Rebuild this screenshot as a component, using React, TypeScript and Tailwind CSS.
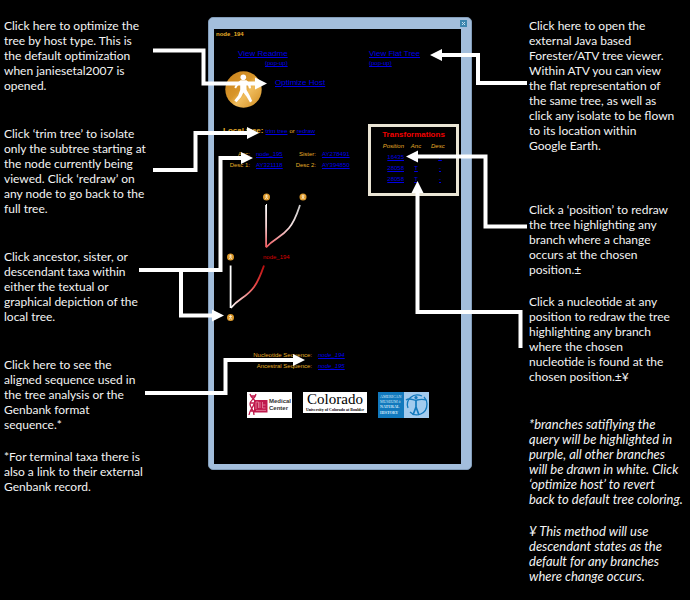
import React from "react";

const leftNotes = [
  { gap: "text-[12px]", text: "Click here to optimize the\ntree by host type. This is\nthe default optimization\nwhen janiesetal2007 is\nopened." },
  { gap: "mt-[33px] text-[12px]", text: "Click ‘trim tree’ to isolate\nonly the subtree starting at\nthe node currently being\nviewed. Click ‘redraw’ on\nany node to go back to the\nfull tree." },
  { gap: "mt-[33px] text-[12px]", text: "Click ancestor, sister, or\ndescendant taxa within\neither the textual or\ngraphical depiction of the\nlocal tree." },
  { gap: "mt-[33px] text-[12px]", text: "Click here to see the\naligned sequence used in\nthe tree analysis or the\nGenbank format\nsequence.*" },
  { gap: "mt-[17px] text-[12px]", text: "*For terminal taxa there is\nalso a link to their external\nGenbank record." },
];

const rightNotes = [
  { gap: "text-[12px]", text: "Click here to open the\nexternal Java based\nForester/ATV tree viewer.\nWithin ATV you can view\nthe flat representation of\nthe same tree, as well as\nclick any isolate to be flown\nto its location within\nGoogle Earth." },
  { gap: "mt-[49px] text-[12px]", text: "Click a ‘position’ to redraw\nthe tree highlighting any\nbranch where a change\noccurs at the chosen\nposition.±" },
  { gap: "mt-[17px] text-[12px]", text: "Click a nucleotide at any\nposition to redraw the tree\nhighlighting any branch\nwhere the chosen\nnucleotide is found at the\nchosen position.±¥" },
  { gap: "mt-[33px] text-[13px] italic", text: "*branches satiflying the\nquery will be highlighted in\npurple, all other branches\nwill be drawn in white. Click\n‘optimize host’ to revert\nback to default tree coloring." },
  { gap: "mt-[17px] text-[13px] italic", text: "¥ This method will use\ndescendant states as the\ndefault for any branches\nwhere change occurs." },
];

const transformations = [
  { position: "16435", anc: "C", desc: "T" },
  { position: "28058", anc: "T", desc: "-" },
  { position: "28058", anc: "T", desc: "-" },
];

function Notes({ items }: { items: { gap: string; text: string }[] }) {
  return (
    <>
      {items.map((n) => (
        <p key={n.text} className={"whitespace-pre leading-[15px] text-[#f4f4f4] " + n.gap}>
          {n.text}
        </p>
      ))}
    </>
  );
}

function Link({ children, className = "" }: { children: React.ReactNode; className?: string }) {
  return (
    <a href="#" className={"text-[#0000e6] underline decoration-1 underline-offset-1 " + className}>
      {children}
    </a>
  );
}

function HostIcon() {
  return (
    <svg viewBox="0 0 37 37" className="size-[37px] shrink-0" role="img" aria-label="Human host">
      <defs>
        <linearGradient id="host" x1="0" y1="0" x2="1" y2="1">
          <stop offset="0" stopColor="#c9811c" />
          <stop offset="0.45" stopColor="#d8962a" />
          <stop offset="0.6" stopColor="#f0bd5e" />
          <stop offset="1" stopColor="#d08a1c" />
        </linearGradient>
      </defs>
      <circle cx="18.5" cy="18.5" r="18.2" fill="url(#host)" />
      <circle cx="18.3" cy="6.3" r="2.8" fill="#fff" />
      <path d="M15.5 9.2 L21.5 9.2 L25.5 13 L26 17.3 L24 17.6 L23 14.3 L21.4 13.3 L21.6 19 L24.6 24.2 L27.2 30 L25 31.5 L21.5 25.4 L18.4 21.6 L16 26.2 L11.5 31.2 L9.3 29.6 L13.2 24.6 L15.2 19 L15.2 13.2 L13 14.2 L11 17.6 L9.3 16.6 L11.5 12.4 Z" fill="#fff" />
    </svg>
  );
}

function TreeNode({ x, y }: { x: number; y: number }) {
  return (
    <g>
      <circle cx={x} cy={y} r="3.5" fill="#dc992c" />
      <path d={`M${x} ${y - 2.4} v2 m-1.5 -0.6 h3 m-1.5 0.8 l-1.2 2.3 m1.2 -2.3 l1.2 2.3`} stroke="#fff3d4" strokeWidth="0.8" fill="none" />
    </g>
  );
}

function LocalTree() {
  return (
    <svg viewBox="0 0 100 135" className="mt-[20px] ml-[9px] h-[135px] w-[100px]" role="img" aria-label="Local tree">
      <defs>
        <linearGradient id="stem" gradientUnits="userSpaceOnUse" x1="0" y1="15" x2="0" y2="57">
          <stop offset="0" stopColor="#fff" />
          <stop offset="0.5" stopColor="#f4d0d0" />
          <stop offset="1" stopColor="#f05a60" />
        </linearGradient>
        <linearGradient id="child" gradientUnits="userSpaceOnUse" x1="43" y1="57" x2="77" y2="15">
          <stop offset="0" stopColor="#f05a60" />
          <stop offset="0.6" stopColor="#f6e4e4" />
          <stop offset="1" stopColor="#c8c8c8" />
        </linearGradient>
        <linearGradient id="current" gradientUnits="userSpaceOnUse" x1="8" y1="118" x2="41" y2="75">
          <stop offset="0" stopColor="#fff" />
          <stop offset="0.6" stopColor="#e84848" />
          <stop offset="1" stopColor="#b80c0c" />
        </linearGradient>
      </defs>
      <path d="M43 15 H43.1 V57" stroke="url(#stem)" strokeWidth="1.8" fill="none" />
      <path d="M43 57.5 C51 48 58 48 66 38 C72 31 74 24 77 15" stroke="url(#child)" strokeWidth="1.8" fill="none" />
      <path d="M7.6 75.5 V118" stroke="#fff" strokeWidth="1.8" fill="none" />
      <path d="M7.8 118 C16 108 23 108 31 97 C36 90 38 84 41 75.5" stroke="url(#current)" strokeWidth="1.8" fill="none" />
      <TreeNode x={43.5} y={7} />
      <TreeNode x={80} y={7} />
      <TreeNode x={7.5} y={67} />
      <TreeNode x={7.5} y={127.5} />
      <text x="40" y="69" fontSize="6" fill="#dc0000">node_194</text>
    </svg>
  );
}

function MedicalLogo() {
  return (
    <div className="flex h-[26px] w-[45px] items-center bg-white">
      <svg viewBox="0 0 21 26" className="h-[26px] w-[21px] shrink-0" aria-hidden="true">
        <rect x="7" y="8" width="13.5" height="12.5" fill="#c01a4c" />
        <g stroke="#c01a4c" fill="none" strokeWidth="1.3">
          <path d="M3 2 C4 6 8 7 9 11 M9 2 C8 7 3 8 3 12 C3 16 7 17 7 23 M7 12 C6 16 3 17 2 23 M4 4 H8 M3 11 H8 M3 19 H7" />
        </g>
        <path d="M9 17 V10 h2.5 v6 M13 10 v6 M15.5 10 v6 h3 M15.5 13 h3 M9 18.4 h10" stroke="#e78aa5" strokeWidth="0.8" fill="none" />
      </svg>
      <span className="ml-px text-[6px] leading-[7px] font-bold text-[#333]">
        Medical
        <br />
        Center
      </span>
    </div>
  );
}

function ColoradoLogo() {
  return (
    <div className="flex h-[21px] w-[64px] flex-col items-center bg-white font-['Liberation_Serif',serif] text-black">
      <span className="text-[15px] leading-[15px]">Colorado</span>
      <span className="text-[4px] leading-[5px] font-bold whitespace-nowrap">University of Colorado at Boulder</span>
    </div>
  );
}

function MuseumLogo() {
  return (
    <div className="flex h-[26px] w-[51px] bg-[#a2cbee]">
      <div className="w-[26px] bg-[#1279bd] pt-[2px] pl-[2px] font-['Liberation_Serif',serif] text-[#d3e9fa]">
        <p className="text-[4px] leading-[5px]">AMERICAN</p>
        <p className="text-[4px] leading-[5px]">MUSEUM ö</p>
        <p className="text-[4px] leading-[6px] font-bold">NATURAL</p>
        <p className="text-[4px] leading-[6px] font-bold">HISTORY</p>
      </div>
      <svg viewBox="0 0 25 26" className="h-[26px] w-[25px]" aria-hidden="true">
        <g fill="none" stroke="#1279bd" strokeWidth="1.3">
          <path d="M18 4 C9 0 1 8 4 16 M6 20 C12 26 23 22 23 12 C23 9 22 7 20 5" />
          <path d="M2 8 C6 5 10 9 13 8 C17 7 19 7 22 8" />
          <path d="M12 8 V15 L9 23 M12 15 L15 23" strokeWidth="1.7" />
        </g>
        <circle cx="12" cy="5.5" r="1.6" fill="#1279bd" />
      </svg>
    </div>
  );
}

function Panel() {
  return (
    <section className="mt-[17px] h-fit rounded-[5px] border-[1px] border-[#839db9] bg-[#a3bedc] pr-[10px] pb-[5px] pl-[5px] font-['Liberation_Sans',Arial,sans-serif] text-[6px] leading-[10px] text-[#e6ac28]">
      <div className="-mr-[6px] flex h-[11px] items-center justify-end">
        <button aria-label="Close" className="flex size-[7px] items-center justify-center bg-[#3d86ae]">
          <svg viewBox="0 0 7 7" className="size-[7px]"><path d="M2 2 L5 5 M5 2 L2 5" stroke="#c4e0ef" strokeWidth="1" /></svg>
        </button>
      </div>
      <div className="bg-black pb-[46px]">
        <h1 className="pl-[2px] font-bold">node_194</h1>
        <div className="mt-[10px] flex justify-between pr-[41px] pl-[24px]">
          <div className="flex flex-col items-end">
            <Link className="text-[8px] leading-[10px]">View Readme</Link>
            <Link className="leading-[8px]">(pop-up)</Link>
          </div>
          <div className="flex flex-col items-start">
            <Link className="text-[8px] leading-[10px]">View Flat Tree</Link>
            <Link className="leading-[8px]">(pop-up)</Link>
          </div>
        </div>
        <div className="mt-[4px] flex items-start gap-[13px] pl-[11px]">
          <HostIcon />
          <Link className="mt-[7px] text-[8px] leading-[10px]">Optimize Host</Link>
        </div>
        <div className="mt-[16px] flex items-start justify-between pr-[2px]">
          <div>
            <div className="flex items-baseline gap-[2px] pl-[9px] leading-[14px]">
              <h2 className="text-[8px] font-bold">Local tree:</h2>
              <Link>trim tree</Link>
              <span>or</span>
              <Link>redraw</Link>
            </div>
            <table className="mt-[10px] border-collapse">
              <tbody>
                <tr className="h-[11px]">
                  <th className="w-[36px] p-0 text-right font-normal">Anc:</th>
                  <td className="w-[36px] p-0 pl-[6px]"><Link>node_195</Link></td>
                  <th className="w-[30px] p-0 text-right font-normal">Sister:</th>
                  <td className="p-0 pl-[6px]"><Link>AY278491</Link></td>
                </tr>
                <tr className="h-[11px]">
                  <th className="p-0 text-right font-normal">Desc 1:</th>
                  <td className="p-0 pl-[6px]"><Link>AY321118</Link></td>
                  <th className="p-0 text-right font-normal">Desc 2:</th>
                  <td className="p-0 pl-[6px]"><Link>AY394850</Link></td>
                </tr>
              </tbody>
            </table>
            <LocalTree />
          </div>
          <div className="h-[72px] w-[91px] border-[3px] border-[#eae5d5] pt-[2px]">
            <h2 className="text-center text-[8px] leading-[11px] font-bold text-[#f00000]">Transformations</h2>
            <table className="w-full table-fixed border-collapse">
              <thead>
                <tr className="h-[11px] italic">
                  <th className="w-[33px] p-0 text-right font-normal">Position</th>
                  <th className="w-[24px] p-0 font-normal">Anc</th>
                  <th className="p-0 text-left font-normal"><span className="ml-[3px]">Desc</span></th>
                </tr>
              </thead>
              <tbody>
                {transformations.map((t, i) => (
                  <tr key={i} className="h-[11px]">
                    <td className="p-0 text-right"><Link>{t.position}</Link></td>
                    <td className="p-0 text-center"><Link>{t.anc}</Link></td>
                    <td className="p-0 pr-[4px] text-center"><Link>{t.desc}</Link></td>
                  </tr>
                ))}
              </tbody>
            </table>
          </div>
        </div>
        <table className="mt-[24px] border-collapse">
          <tbody>
            <tr className="h-[11px]">
              <th className="w-[98px] p-0 text-right font-normal">Nucleotide Sequence:</th>
              <td className="p-0 pl-[6px] italic"><Link>node_194</Link></td>
            </tr>
            <tr className="h-[11px]">
              <th className="p-0 text-right font-normal">Ancestral Sequence:</th>
              <td className="p-0 pl-[6px] italic"><Link>node_195</Link></td>
            </tr>
          </tbody>
        </table>
        <div className="mt-[21px] flex items-start gap-[11px] pl-[33px]">
          <MedicalLogo />
          <ColoradoLogo />
          <MuseumLogo />
        </div>
      </div>
    </section>
  );
}

function Arrows() {
  return (
    <svg viewBox="0 0 690 600" className="pointer-events-none absolute top-0 left-0 h-[600px] w-[690px]" aria-hidden="true">
      <g fill="none" stroke="#fff" strokeWidth="4">
        <path d="M153 50.5 H203.5 V83.5 H257" />
        <path d="M153 170 H195.5 V133 H249" />
        <path d="M139 270 H220.5 V158 H243" />
        <path d="M181 270 V315.5 H213" />
        <path d="M145 393 H225.5 V360 H295" />
        <path d="M527 83 H478 V55 H440" />
        <path d="M527 226.5 H485.5 V156.5 H416" />
        <path d="M520.5 348 V312 H417.5 V191" />
      </g>
      <g fill="#fff">
        <path d="M255 77.5 L267 83.5 L255 89.5 Z" />
        <path d="M247 127 L259 133 L247 139 Z" />
        <path d="M241 152 L253 158 L241 164 Z" />
        <path d="M212 309.5 L224 315.5 L212 321.5 Z" />
        <path d="M293 354 L305 360 L293 366 Z" />
        <path d="M442 49 L430 55 L442 61 Z" />
        <path d="M418 150.5 L406 156.5 L418 162.5 Z" />
        <path d="M411.5 193 L417.5 181 L423.5 193 Z" />
      </g>
    </svg>
  );
}

export default function App() {
  return (
    <div className="min-h-screen bg-black font-[Lato,'Open_Sans',sans-serif]">
      <main className="relative mx-auto grid max-w-[690px] grid-cols-[208px_264px_1fr] pb-[27px]">
        <aside className="pt-[18px] pl-[4px]">
          <Notes items={leftNotes} />
        </aside>
        <Panel />
        <aside className="pt-[18px] pl-[57px]">
          <Notes items={rightNotes} />
        </aside>
        <Arrows />
      </main>
    </div>
  );
}
